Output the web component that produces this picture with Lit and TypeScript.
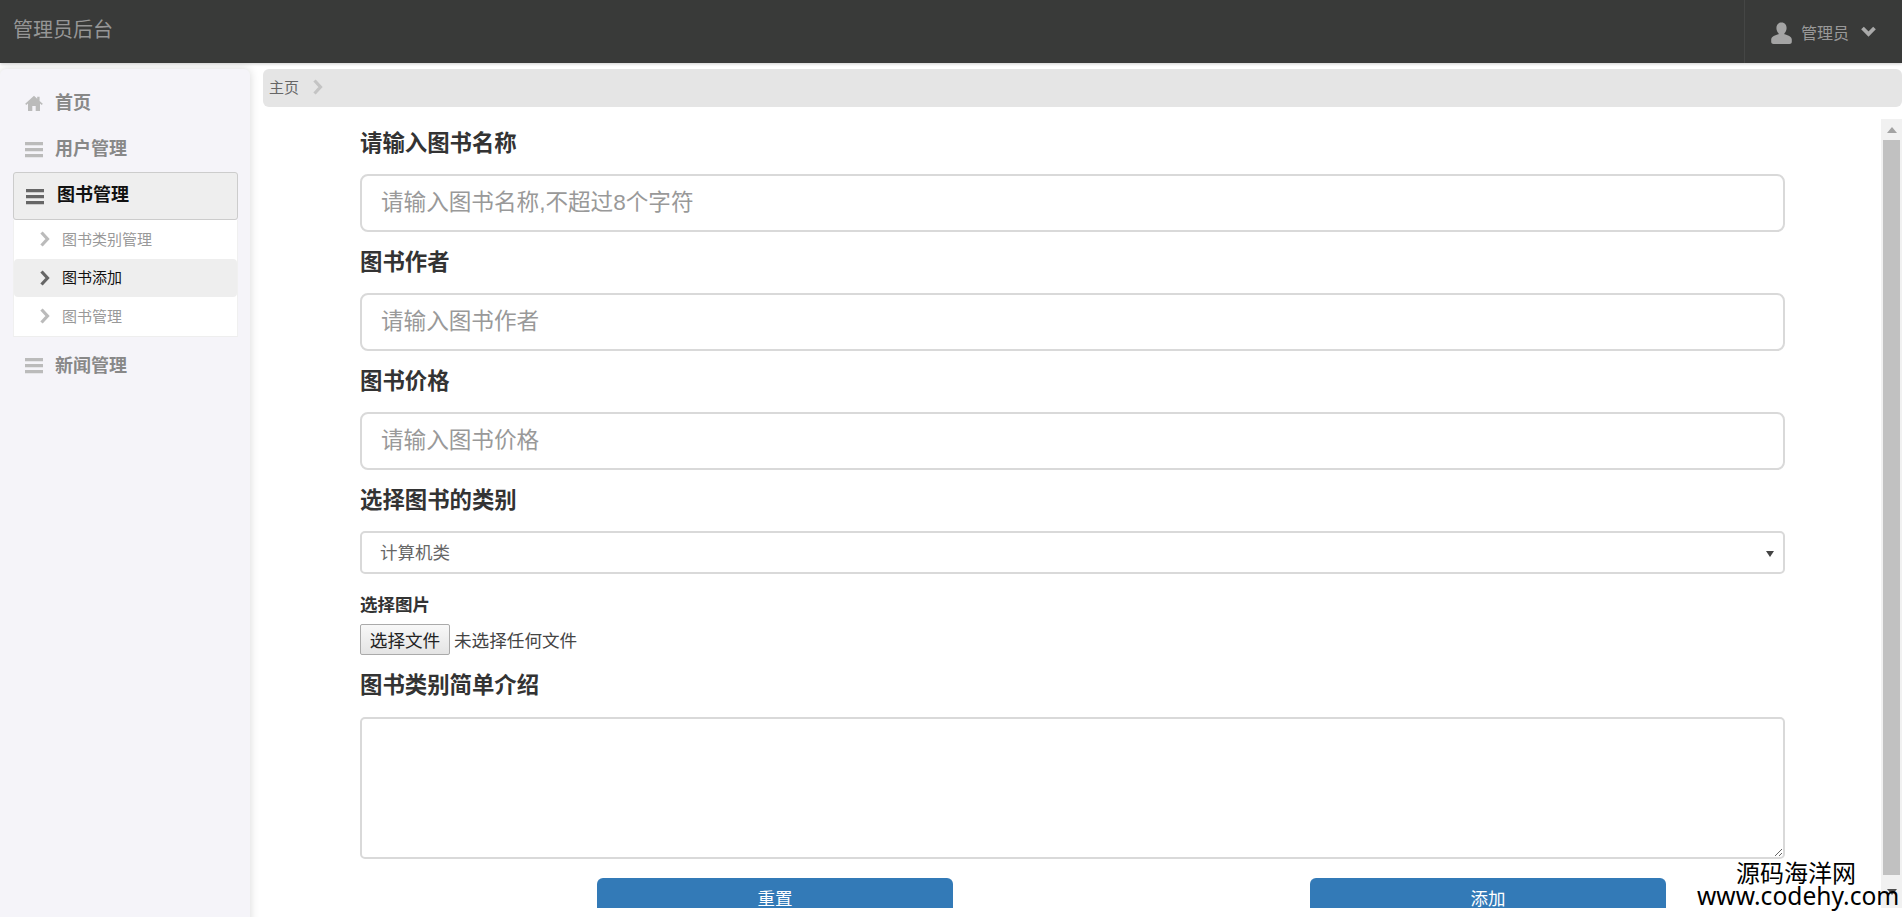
import { LitElement, html, css, svg, TemplateResult } from 'lit';
import { customElement } from 'lit/decorators.js';

const homeIcon = svg`<path d="M9 0.8 L0.2 8.8 L1.2 10 L3 8.6 L3 16 L7.3 16 L7.3 11 L10.7 11 L10.7 16 L15 16 L15 8.6 L16.8 10 L17.8 8.8 L14.6 5.9 L14.6 1.8 L12.2 1.8 L12.2 3.7 Z" fill="currentColor"/>`;
const menuIcon = svg`<path d="M0 1h18v3.2H0zM0 7h18v3.2H0zM0 13h18v3.2H0z" fill="currentColor"/>`;
const chevronRight = svg`<path d="M2.5 1.5 L8.5 8 L2.5 14.5" fill="none" stroke="currentColor" stroke-width="3.2"/>`;
const userIcon = svg`<path d="M10.5 0.5 C14 0.5 15.6 3 15.6 6 C15.6 8.6 14.4 10.4 13.4 11.2 L13.4 12.2 C16.5 13 20.8 14.6 20.8 17.5 L20.8 20 C20.8 21.3 19.8 22 18.5 22 L2.5 22 C1.2 22 0.2 21.3 0.2 20 L0.2 17.5 C0.2 14.6 4.5 13 7.6 12.2 L7.6 11.2 C6.6 10.4 5.4 8.6 5.4 6 C5.4 3 7 0.5 10.5 0.5 Z" fill="currentColor"/>`;
const chevronDown = svg`<path d="M1.5 2 L7.5 8 L13.5 2" fill="none" stroke="currentColor" stroke-width="3.8"/>`;

@customElement('app-root')
export class AppRoot extends LitElement {
	private navItem(icon: TemplateResult, label: string, open = false) {
		return html`<div class="nav-item ${open ? 'open' : ''}">
			<svg class="nav-icon" viewBox="0 0 18 17">${icon}</svg>
			<span>${label}</span>
		</div>`;
	}

	private subItem(label: string, active = false) {
		return html`<div class="sub-item ${active ? 'active' : ''}">
			<svg class="sub-icon" viewBox="0 0 11 16">${chevronRight}</svg>
			<span>${label}</span>
		</div>`;
	}

	private field(label: string, placeholder: string) {
		return html`<div class="field">
			<label class="big-label">${label}</label>
			<input class="text-input" type="text" placeholder=${placeholder} />
		</div>`;
	}

	protected render(): TemplateResult {
		return html`
			<header class="topbar">
				<div class="brand">管理员后台</div>
				<div class="user">
					<svg class="user-icon" viewBox="0 0 21 22">${userIcon}</svg>
					<span>管理员</span>
					<svg class="caret" viewBox="0 0 15 11">${chevronDown}</svg>
				</div>
			</header>
			<div class="body">
				<aside class="sidebar">
					${this.navItem(homeIcon, '首页')} ${this.navItem(menuIcon, '用户管理')}
					${this.navItem(menuIcon, '图书管理', true)}
					<div class="sub-list">
						${this.subItem('图书类别管理')} ${this.subItem('图书添加', true)}
						${this.subItem('图书管理')}
					</div>
					${this.navItem(menuIcon, '新闻管理')}
				</aside>
				<main class="main">
					<div class="crumb">
						<span>主页</span>
						<svg class="crumb-icon" viewBox="0 0 11 16">${chevronRight}</svg>
					</div>
					<div class="frame">
						<form class="form">
							${this.field('请输入图书名称', '请输入图书名称,不超过8个字符')}
							${this.field('图书作者', '请输入图书作者')}
							${this.field('图书价格', '请输入图书价格')}
							<div class="field">
								<label class="big-label">选择图书的类别</label>
								<div class="select-wrap">
									<select class="select">
										<option>计算机类</option>
									</select>
								</div>
							</div>
							<div class="file-field">
								<label class="small-label">选择图片</label>
								<div class="file-row">
									<button type="button" class="file-btn">选择文件</button>
									<span>未选择任何文件</span>
								</div>
							</div>
							<div class="field intro">
								<label class="big-label">图书类别简单介绍</label>
								<textarea class="textarea"></textarea>
							</div>
							<div class="actions">
								<button type="reset" class="primary">重置</button>
								<button type="button" class="primary">添加</button>
							</div>
						</form>
						<div class="scrollbar">
							<div class="arrow up"></div>
							<div class="thumb"></div>
							<div class="arrow down"></div>
						</div>
					</div>
				</main>
			</div>
			<div class="watermark">
				<div class="wm-cn">源码海洋网</div>
				<div class="wm-en">www.codehy.com</div>
			</div>
		`;
	}

	static styles = css`
		:host {
			display: block;
			position: relative;
			height: 917px;
			overflow: hidden;
			background: #fff;
			font-family: 'Liberation Sans', 'Noto Sans CJK SC', sans-serif;
		}

		* {
			box-sizing: border-box;
		}

		.topbar {
			height: 63px;
			background: #393a39;
			display: flex;
			justify-content: space-between;
			align-items: stretch;
			box-shadow: 0 1px 3px rgba(0, 0, 0, 0.2);
		}

		.brand {
			padding-left: 13px;
			font-size: 20px;
			line-height: 60px;
			color: #969696;
		}

		.user {
			width: 158px;
			border-left: 1px solid #454645;
			display: flex;
			align-items: center;
			padding-left: 26px;
			color: #999;
			font-size: 16px;
		}

		.user-icon {
			width: 21px;
			height: 22px;
			margin: 2px 10px 0 0;
			color: #a4a4a4;
		}

		.user span {
			margin-left: -1px;
		}

		.caret {
			width: 15px;
			height: 11px;
			margin: 0 0 0 12px;
			color: #aaa;
		}

		.body {
			display: flex;
			padding-top: 6px;
			height: 854px;
		}

		.sidebar {
			width: 250px;
			flex: none;
			height: 860px;
			padding: 11px 12px 0 13px;
			background: #f5f4f9;
			border-radius: 6px 6px 0 0;
			box-shadow: 0 0 10px rgba(0, 0, 0, 0.16);
		}

		.nav-item {
			height: 46px;
			display: flex;
			align-items: center;
			gap: 12px;
			padding-left: 12px;
			font-size: 18px;
			font-weight: bold;
			color: #888;
		}

		.nav-item span {
			padding-bottom: 4px;
		}

		.nav-icon {
			width: 18px;
			height: 17px;
			color: #bbb;
		}

		.nav-item.open {
			height: 48px;
			background: #eee;
			border: 1px solid #ccc;
			border-radius: 3px;
			color: #111;
			padding-left: 12px;
			gap: 13px;
		}

		.nav-item.open span {
			padding-bottom: 6px;
		}

		.nav-item.open .nav-icon {
			color: #666;
		}

		.sub-list {
			margin: 0 0 6px;
			background: #fff;
			border-bottom: 1px solid #eee;
			border-left: 1px solid #f0f0f0;
			border-right: 1px solid #f0f0f0;
		}

		.sub-item {
			height: 38.6px;
			display: flex;
			align-items: center;
			gap: 12px;
			padding-left: 25px;
			font-size: 15px;
			color: #999;
		}

		.sub-item span {
			padding-bottom: 2px;
		}

		.sub-item.active {
			background: #eee;
			border-radius: 4px;
			color: #111;
		}

		.sub-icon {
			width: 11px;
			height: 16px;
			color: #bbb;
		}

		.sub-item.active .sub-icon {
			color: #666;
		}

		.main {
			flex: 1;
			min-width: 0;
			margin-left: 13px;
		}

		.crumb {
			height: 38px;
			background: #e5e5e5;
			border-radius: 6px;
			display: flex;
			align-items: center;
			gap: 13px;
			padding: 0 0 3px 6px;
			font-size: 15px;
			color: #666;
		}

		.crumb-icon {
			width: 11px;
			height: 16px;
			color: #c4c4c4;
		}

		.frame {
			display: flex;
			height: 789px;
			margin-top: 12px;
		}

		.form {
			flex: 1;
			min-width: 0;
			height: 100%;
			overflow: hidden;
			padding: 8px 96px 0 97px;
		}

		.field {
			margin-bottom: 14px;
		}

		.big-label {
			display: block;
			height: 32px;
			line-height: 34px;
			margin-bottom: 15px;
			font-size: 22.4px;
			font-weight: bold;
			color: #333;
		}

		.text-input {
			display: block;
			width: 100%;
			height: 58px;
			padding: 0 19px;
			border: 2px solid #d9d9d9;
			border-radius: 8px;
			outline: none;
			font-family: inherit;
			font-size: 22.6px;
			color: #555;
		}

		.text-input::placeholder {
			color: #999;
		}

		.select-wrap {
			position: relative;
		}

		/* native arrow is a chevron here, the reference has a small solid one */
		.select-wrap::after {
			content: '';
			position: absolute;
			top: 20px;
			right: 11px;
			border-left: 4px solid transparent;
			border-right: 4px solid transparent;
			border-top: 6px solid #444;
		}

		.select {
			display: block;
			width: 100%;
			height: 43px;
			padding: 0 18px;
			border: 2px solid #d9d9d9;
			border-radius: 5px;
			outline: none;
			appearance: none;
			background-color: #fff;
			font-family: inherit;
			font-size: 17.5px;
			color: #666;
		}

		.file-field {
			margin-top: -14px;
			padding-top: 19px;
		}

		.small-label {
			display: block;
			height: 24px;
			line-height: 24px;
			margin-bottom: 7px;
			font-size: 17.5px;
			font-weight: bold;
			color: #333;
		}

		.file-row {
			display: flex;
			align-items: center;
			gap: 4px;
			height: 31px;
			font-size: 17.6px;
			color: #444;
		}

		.file-btn {
			width: 90px;
			height: 31px;
			padding: 0;
			border: 1px solid #aaa;
			border-radius: 2px;
			background: linear-gradient(#f8f8f8, #e4e4e4);
			font-family: inherit;
			font-size: 17.6px;
			color: #222;
		}

		.intro {
			margin-top: 14px;
			margin-bottom: 19px;
		}

		.intro .big-label {
			margin-bottom: 16px;
		}

		.textarea {
			display: block;
			width: 100%;
			height: 142px;
			border: 2px solid #d9d9d9;
			border-radius: 5px;
			outline: none;
		}

		.actions {
			display: flex;
			justify-content: space-between;
			padding: 0 119px 0 237px;
		}

		.primary {
			width: 356px;
			height: 40px;
			padding: 0 0 2px;
			border: none;
			border-radius: 6px;
			background: #337ab7;
			color: #fff;
			font-family: inherit;
			font-size: 17.5px;
		}

		.scrollbar {
			width: 21px;
			flex: none;
			display: flex;
			flex-direction: column;
			background: #f1f1f1;
		}

		.thumb {
			flex: 1;
			margin: 0 2px;
			background: #c1c1c1;
		}

		.arrow {
			height: 21px;
			display: flex;
			align-items: center;
			justify-content: center;
		}

		.arrow.down {
			height: 33px;
		}

		.arrow::before {
			content: '';
			border-left: 5px solid transparent;
			border-right: 5px solid transparent;
		}

		.arrow.up::before {
			border-bottom: 6px solid #a3a3a3;
		}

		.arrow.down::before {
			border-top: 6px solid #505050;
		}

		.watermark {
			position: absolute;
			right: 4px;
			bottom: 9px;
			width: 201px;
			text-align: center;
			color: #000;
			pointer-events: none;
		}

		.wm-cn {
			font: 24px/26px 'Noto Sans CJK SC', sans-serif;
			margin: 0 0 -1px -3px;
		}

		.wm-en {
			font: 24.6px/24px 'Noto Sans', sans-serif;
			white-space: nowrap;
		}
	`;
}
